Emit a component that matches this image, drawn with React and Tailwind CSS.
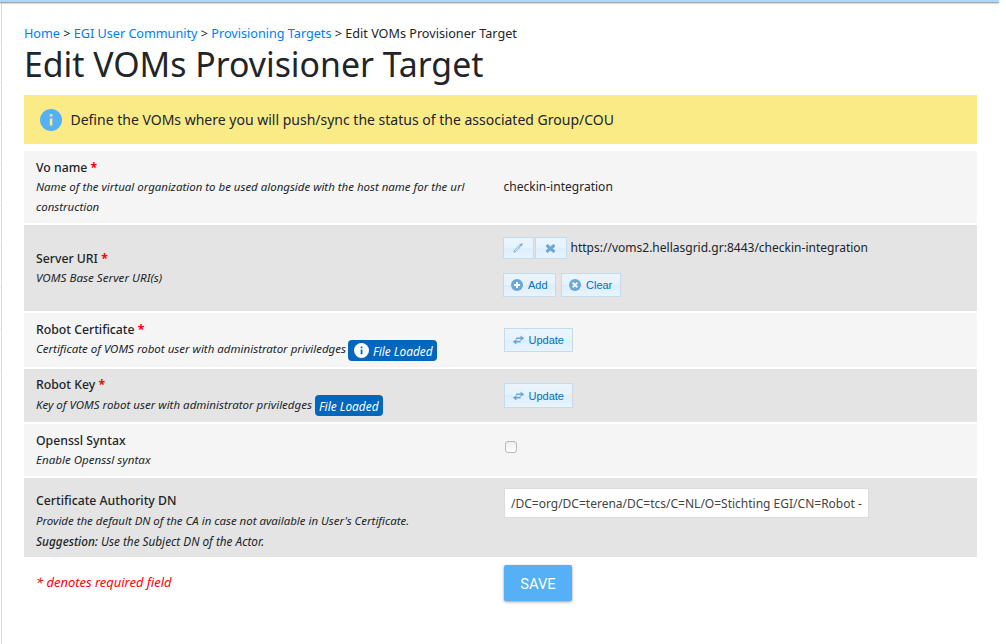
import React from "react";

const Star = () => <span className="font-bold text-[#ff0000]">*</span>;

function Row({ className, labelClass = "", label, required, children, field }) {
  return (
    <div className={`flex w-[953px] shrink-0 items-center pl-3 ${className}`}>
      <div className="w-[467px] shrink-0 pr-7">
        <div className={`text-[12.25px] leading-5 font-medium ${labelClass}`}>
          {label} {required && <Star />}
        </div>
        <div className="text-[11.46px] leading-5 italic">{children}</div>
      </div>
      <div className="flex-1">{field}</div>
    </div>
  );
}

function UiButton({ className, children }) {
  return (
    <button
      className={`flex items-center border border-[#c5dbec] bg-linear-[to_bottom,#e9f4fd_0%,#e7f3fc_50%,#dceefb_50%,#e8f4fe_100%] font-['Liberation_Sans',Arial,sans-serif] text-[11px] text-[#0070c0] ${className}`}
    >
      {children}
    </button>
  );
}

const Swap = () => (
  <svg width="12" height="10" viewBox="0 0 12 10" fill="#6da8d5" className="-mr-px -translate-x-[0.5px]">
    <path d="M3.5 2.4H8V.4l3.8 2.9L8 6.1V4.1H3.5z" />
    <path d="M8 5.8v1.8H4v2L.2 6.8 4 4v1.8z" />
  </svg>
);
const Pencil = () => (
  <svg width="10" height="10" viewBox="0 0 10 10" fill="none" stroke="#6da8d5" className="-translate-x-px">
    <path d="M.9 9.1l.5-1.9L6 2.8l1.2 1.2-4.4 4.5z" strokeWidth=".9" />
    <path d="M6.6 1.3l2.1 2.1M7.6 2.4l1.9-1.9" strokeWidth="1.3" />
  </svg>
);
const Cross = () => (
  <svg width="10" height="9" viewBox="0 0 10 9" stroke="#6da8d5" strokeWidth="3" className="-translate-x-[0.5px]">
    <path d="M1 1l8 7M9 1l-8 7" />
  </svg>
);
const Circled = ({ cross }) => (
  <svg width="12" height="12" viewBox="0 0 12 12">
    <circle cx="6" cy="6" r="6" fill="#6da8d5" />
    <path d={cross ? "M3.6 3.6l4.8 4.8M8.4 3.6l-4.8 4.8" : "M6 3v6M3 6h6"} stroke="#f2f9ff" strokeWidth="2" />
  </svg>
);
const Info = ({ size, bg, fg }) => (
  <svg width={size} height={size} viewBox="0 0 22 22" className="shrink-0">
    <circle cx="11" cy="11" r="11" fill={bg} />
    <path d="M9.8 5.2h2.6v2.4H9.8z M9.8 9.4h2.6v7.2H9.8z" fill={fg} />
  </svg>
);

const Sidebar = () => (
  <div className="flex w-[2px] shrink-0 flex-col border-r border-[#dcdcdc]">
    {[40, 41, 41, 41, 41, 41, 41, 41, 41].map((h, i) => (
      <div key={i} className="shrink-0 border-b border-[#eeeeee]" style={{ height: h }} />
    ))}
  </div>
);

const link = "text-[#007bff]";

export default function App() {
  return (
    <div className="flex h-[644px] w-[1006px] flex-col overflow-hidden bg-white font-['Noto_Sans',sans-serif] text-[#212529]">
      <div className="z-10 h-[2px] w-[999px] shrink-0 bg-[#aad7fb] shadow-[0_1px_2px_rgba(0,0,0,0.5)]" />
      <div className="flex flex-1">
        <Sidebar />
        <main className="flex flex-col pt-[22px] pl-[22px]">
          <nav className="h-[19px] text-[12.63px] leading-[19px]">
            <a className={link}>Home</a> &gt; <a className={link}>EGI User Community</a> &gt;{" "}
            <a className={link}>Provisioning Targets</a> &gt; Edit VOMs Provisioner Target
          </nav>
          <h1 className="h-[52px] text-[33.8px] leading-[43px]">Edit VOMs Provisioner Target</h1>
          <div className="flex h-[49px] w-[953px] items-center gap-[8.5px] bg-[#faeb87] pl-4 text-[14px]">
            <Info size={22} bg="#55b0f5" fg="#faeb87" />
            <span>Define the VOMs where you will push/sync the status of the associated Group/COU</span>
          </div>
          <div className="mt-[7px] flex flex-col gap-[2px]">
            <Row
              className="h-[72px] bg-[#f5f5f5]"
              labelClass="pt-px -mb-px"
              label="Vo name"
              required
              field={<div className="mt-px ml-[0.5px] text-[12.04px]">checkin-integration</div>}
            >
              Name of the virtual organization to be used alongside with the host name for the url construction
            </Row>
            <Row
              className="h-[86px] bg-[#e4e4e4]"
              labelClass="pt-px -mb-px"
              label="Server URI"
              required
              field={
                <div className="mb-[2px] flex flex-col gap-[14px]">
                  <div className="flex h-[22px] items-center">
                    <UiButton className="h-[22px] w-[31px] justify-center"><Pencil /></UiButton>
                    <UiButton className="ml-[1px] h-[22px] w-[32px] justify-center"><Cross /></UiButton>
                    <span className="ml-[3.5px] text-[12.02px]">https://voms2.hellasgrid.gr:8443/checkin-integration</span>
                  </div>
                  <div className="flex gap-[5px]">
                    <UiButton className="h-6 w-[53px] gap-[5px] pl-[7px]"><Circled />Add</UiButton>
                    <UiButton className="h-6 w-[60px] gap-[5px] pl-[7px]"><Circled cross />Clear</UiButton>
                  </div>
                </div>
              }
            >
              <span className="text-[11.65px]">VOMS Base Server URI(s)</span>
            </Row>
            <Row
              className="h-[54px] bg-[#f5f5f5]"
              label="Robot Certificate"
              required
              field={<UiButton className="ml-px h-6 w-[69px] gap-[4.5px] pl-2"><Swap />Update</UiButton>}
            >
              <span className="-mt-px mb-px flex h-5 items-center gap-[2px] whitespace-nowrap">
                <span className="text-[11.5px]">Certificate of VOMS robot user with administrator priviledges</span>
                <span className="mt-[3px] flex h-[21px] items-center gap-1 rounded-[4px] bg-[#0067bc] pr-1 pl-[6px] text-[11.9px] text-white">
                  <Info size={15} bg="#ffffff" fg="#0067bc" />
                  <span>File Loaded</span>
                </span>
              </span>
            </Row>
            <Row
              className="h-[53px] bg-[#e4e4e4]"
              labelClass="-mt-px mb-px"
              label="Robot Key"
              required
              field={<UiButton className="ml-px h-[25px] w-[69px] gap-[4.5px] pt-px pl-2"><Swap />Update</UiButton>}
            >
              <span className="-mt-px mb-px flex h-5 items-center gap-[3px] whitespace-nowrap">
                <span className="text-[11.53px]">Key of VOMS robot user with administrator priviledges</span>
                <span className="mt-[2px] flex h-[21px] items-center rounded-[4px] bg-[#0067bc] px-1 text-[11.9px] text-white">
                  File Loaded
                </span>
              </span>
            </Row>
            <Row
              className="h-[52px] bg-[#f5f5f5]"
              labelClass="pt-px -mb-px"
              label="Openssl Syntax"
              field={
                <div className="mt-[-6px] ml-[2px] size-3 rounded-[3px] border border-[#b9b9b9] bg-linear-to-b from-[#eeeeee] to-white" />
              }
            >
              <span className="text-[11.6px]">Enable Openssl syntax</span>
            </Row>
            <Row
              className="h-[79px] bg-[#e4e4e4] pt-[7px]"
              label="Certificate Authority DN"
              field={
                <input
                  readOnly
                  className="mb-[36px] ml-px block h-[30px] w-[365px] border border-[#dcdcdc] bg-white px-[6px] text-[12px] text-[#444444]"
                  value="/DC=org/DC=terena/DC=tcs/C=NL/O=Stichting EGI/CN=Robot -"
                />
              }
            >
              Provide the default DN of the CA in case not available in User's Certificate.
              <br />
              <span className="text-[11.76px]">
                <span className="font-medium">Suggestion:</span> Use the Subject DN of the Actor.
              </span>
            </Row>
          </div>
          <div className="mt-2 flex pl-[12px]">
            <div className="w-[468px] pt-2 text-[12.95px] leading-[19px] text-[#ff0000] italic">* denotes required field</div>
            <button className="h-9 w-[68px] rounded-[2px] bg-[#55b0f5] pt-[2px] font-[Roboto,sans-serif] text-[14.7px] text-white shadow-[0_1px_3px_rgba(0,0,0,0.4)]">
              SAVE
            </button>
          </div>
        </main>
      </div>
    </div>
  );
}
